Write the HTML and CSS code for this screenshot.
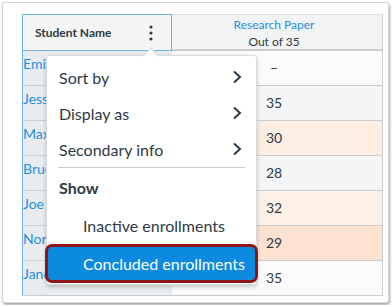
FILE: index.html
```html
<!DOCTYPE html>
<html lang="en">
<head>
    <meta charset="UTF-8">
    <meta name="viewport" content="width=device-width, initial-scale=1.0">
    <title>Gradebook</title>
    <link rel="stylesheet" href="styles.css">
</head>
<body>
    <div class="frame">
        <div class="grid">
            <div class="names">
                <div class="name-head">
                    <span>Student Name</span>
                    <svg class="kebab" width="4" height="16" viewBox="0 0 4 16">
                        <circle cx="2" cy="2" r="1.6" fill="#2d3b45"/>
                        <circle cx="2" cy="8" r="1.6" fill="#2d3b45"/>
                        <circle cx="2" cy="14" r="1.6" fill="#2d3b45"/>
                    </svg>
                </div>
                <div class="name-cell">Emily</div>
                <div class="name-cell">Jessica</div>
                <div class="name-cell">Max</div>
                <div class="name-cell">Bruce</div>
                <div class="name-cell">Joe</div>
                <div class="name-cell">Norman</div>
                <div class="name-cell">Jane</div>
            </div>
            <div class="scores">
                <div class="score-head">
                    <a href="#">Research Paper</a>
                    <div>Out of 35</div>
                </div>
                <div class="score-cell plain">–</div>
                <div class="score-cell grey">35</div>
                <div class="score-cell peach">30</div>
                <div class="score-cell grey">28</div>
                <div class="score-cell peach-light">32</div>
                <div class="score-cell peach-dark">29</div>
                <div class="score-cell plain">35</div>
            </div>
        </div>

        <!-- column options menu -->
        <div class="menu">
            <div class="caret"></div>
            <div class="item">Sort by
                <svg width="10" height="14" viewBox="0 0 10 14"><path d="M2 1.5 L8 7 L2 12.5" fill="none" stroke="#2d3b45" stroke-width="2"/></svg>
            </div>
            <div class="item">Display as
                <svg width="10" height="14" viewBox="0 0 10 14"><path d="M2 1.5 L8 7 L2 12.5" fill="none" stroke="#2d3b45" stroke-width="2"/></svg>
            </div>
            <div class="item">Secondary info
                <svg width="10" height="14" viewBox="0 0 10 14"><path d="M2 1.5 L8 7 L2 12.5" fill="none" stroke="#2d3b45" stroke-width="2"/></svg>
            </div>
            <div class="divider"></div>
            <div class="group">Show</div>
            <div class="option">Inactive enrollments</div>
            <div class="option selected">Concluded enrollments</div>
        </div>
    </div>
</body>
</html>
```

FILE: styles.css
```css
body {
    margin: 0;
    background: #fff;
    font-family: Lato, "Open Sans", sans-serif;
    color: #2d3b45;
}
.frame {
    position: relative;
    box-sizing: border-box;
    width: 387px;
    height: 301px;
    margin: 2px;
    padding: 11px 0 0 19px;
    border: 1px solid #d4d4d4;
    border-radius: 3px;
    box-shadow: 1px 2px 3px rgba(0, 0, 0, 0.35);
    background: #fff;
    overflow: hidden;
}
.grid {
    display: flex;
}
.names {
    width: 150px;
}
.name-head {
    box-sizing: border-box;
    height: 37px;
    display: flex;
    align-items: center;
    justify-content: space-between;
    padding: 0 18px 0 12px;
    border: 1px solid #6eb1e0;
    background: #f5f5f5;
    font-size: 12px;
    font-weight: bold;
}
.name-cell {
    box-sizing: border-box;
    height: 35px;
    padding: 4px 0 0 0;
    border-left: 1px solid #6fb5e6;
    border-bottom: 1px solid #c7cdd1;
    background: #e9ecee;
    color: #1f8fe0;
    font-size: 14px;
    line-height: 17px;
    white-space: nowrap;
    overflow: hidden;
}
.scores {
    width: 210px;
    border-right: 1px solid #c7cdd1;
}
.score-head {
    box-sizing: border-box;
    height: 37px;
    padding: 1px 6px 0 0;
    border-top: 1px solid #dfe2e4;
    border-bottom: 2px solid #c7cdd1;
    background: #f2f3f4;
    text-align: center;
    font-size: 12px;
    line-height: 17px;
}
.score-head a {
    color: #1f8fe0;
    text-decoration: none;
}
.score-cell {
    box-sizing: border-box;
    height: 35px;
    padding-right: 6px;
    border-bottom: 1px solid #c7cdd1;
    text-align: center;
    font-size: 14px;
    line-height: 34px;
}
.plain { background: #fbfbfb; }
.grey { background: #f4f5f6; }
.peach { background: #fdeee3; }
.peach-light { background: #fdf0e6; }
.peach-dark { background: #fde3cf; }

.menu {
    position: absolute;
    left: 43px;
    top: 52px;
    box-sizing: border-box;
    width: 211px;
    height: 230px;
    padding: 3px 0 3px;
    background: #fff;
    border: 1px solid #d9dcde;
    border-radius: 3px;
    box-shadow: 0 2px 4px rgba(0, 0, 0, 0.2);
    font-size: 16px;
}
.caret {
    position: absolute;
    left: 98px;
    top: -6px;
    width: 11px;
    height: 11px;
    background: #fff;
    border-top: 1px solid #d0d4d6;
    border-left: 1px solid #d0d4d6;
    transform: rotate(45deg);
}
.item {
    height: 36px;
    display: flex;
    align-items: center;
    justify-content: space-between;
    padding: 0 14px 0 12px;
}
.divider {
    height: 1px;
    margin: 0 11px 0 11px;
    background: #c7cdd1;
}
.group {
    height: 39px;
    line-height: 39px;
    padding-left: 12px;
    font-weight: bold;
}
.option {
    height: 37px;
    line-height: 37px;
    padding-left: 36px;
}
.option.selected {
    box-sizing: border-box;
    height: 39px;
    line-height: 33px;
    margin: 0 -2px;
    padding-left: 35px;
    border: 3px solid #8e1515;
    border-radius: 7px;
    background: #0b8ae0;
    color: #fff;
}
```
